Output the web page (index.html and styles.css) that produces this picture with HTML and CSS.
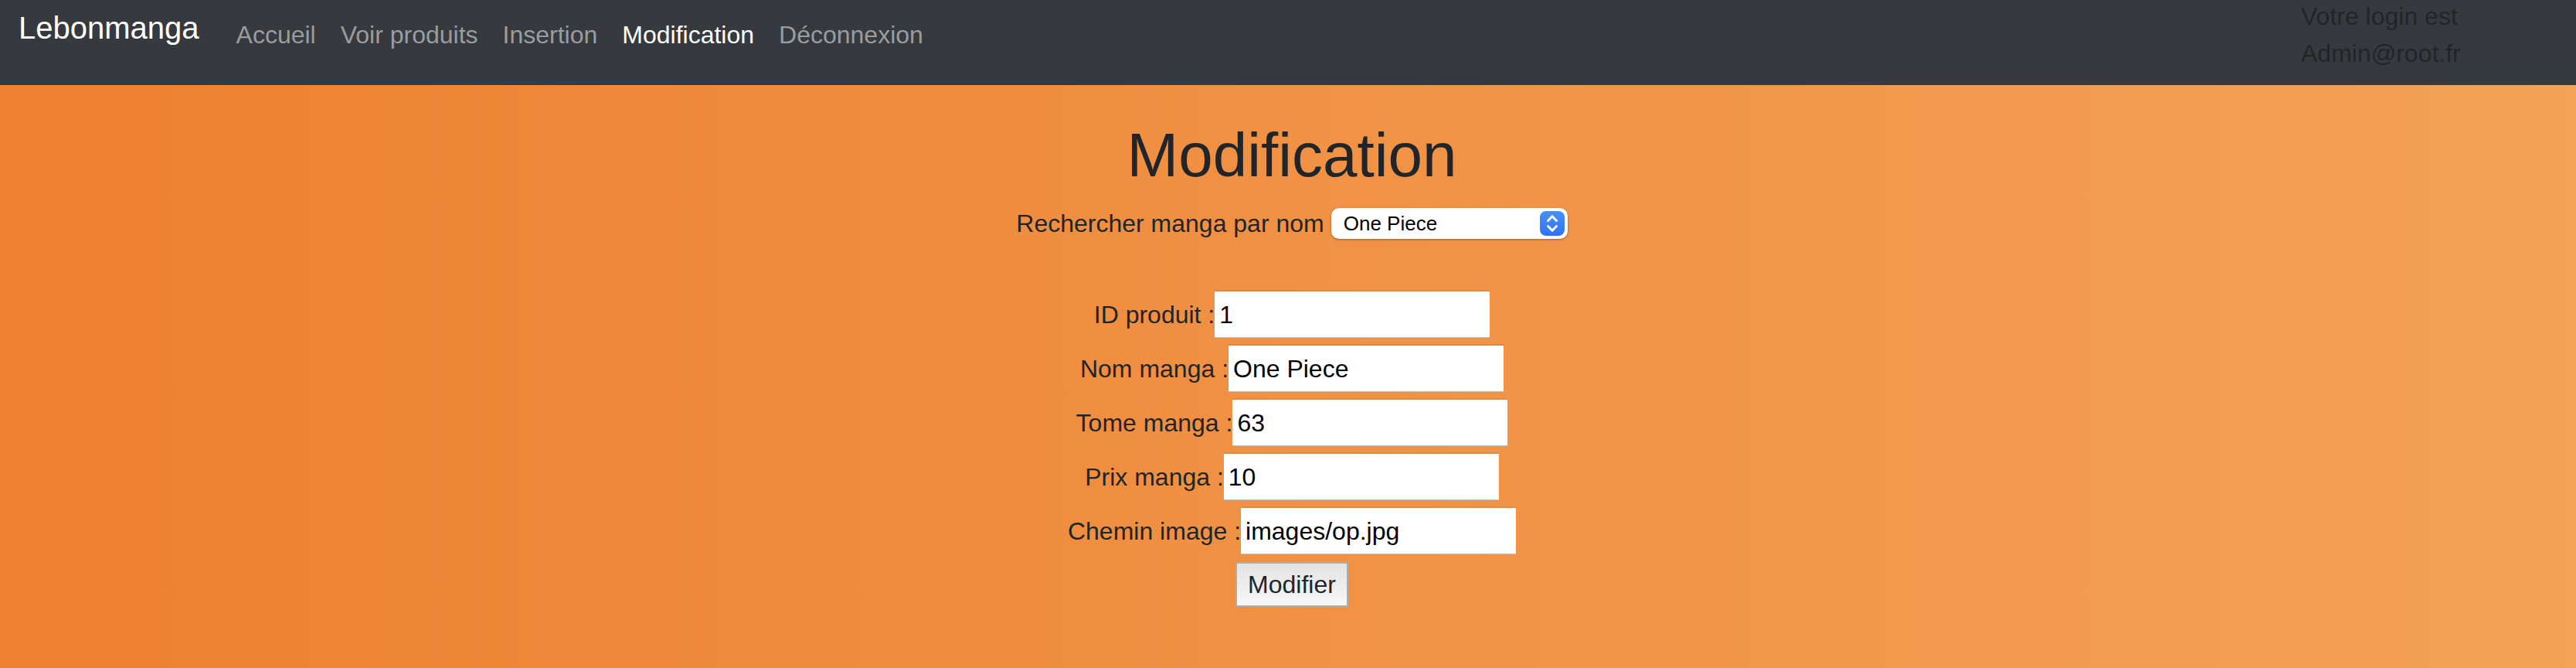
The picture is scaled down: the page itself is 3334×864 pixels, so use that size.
FILE: index.html
```html
<!DOCTYPE html>
<html lang="fr">
<head>
<meta charset="utf-8">
<title>Lebonmanga - Modification</title>
<link rel="stylesheet" href="styles.css">
</head>
<body>
<header class="navbar">
  <a class="brand" href="#">Lebonmanga</a>
  <nav class="nav">
    <a class="nav-link" href="#">Accueil</a>
    <a class="nav-link" href="#">Voir produits</a>
    <a class="nav-link" href="#">Insertion</a>
    <a class="nav-link active" href="#" aria-current="page">Modification</a>
    <a class="nav-link" href="#">Déconnexion</a>
  </nav>
  <p class="login">Votre login est<br>Admin@root.fr</p>
</header>
<main class="content">
  <h1 class="title">Modification</h1>
  <form class="search">
    <label for="manga">Rechercher manga par nom</label>
    <span class="select-wrap">
      <select id="manga" class="select"><option>One Piece</option></select>
      <svg class="select-icon" viewBox="0 0 32 32" aria-hidden="true">
        <defs><linearGradient id="blue" x1="0" y1="0" x2="0" y2="1"><stop offset="0" stop-color="#4a90f8"/><stop offset="1" stop-color="#3073f4"/></linearGradient></defs>
        <rect width="32" height="32" rx="8" fill="url(#blue)"/>
        <path d="M10.5 12.5 16 6.8l5.500 5.700M10.500 19.500l5.500 5.700 5.500-5.700" fill="none" stroke="#fff" stroke-width="3" stroke-linecap="round" stroke-linejoin="round"/>
      </svg>
    </span>
  </form>
  <form class="product">
    <div class="row"><label for="id">ID produit :</label><input class="field" id="id" type="text" value="1"></div>
    <div class="row"><label for="nom">Nom manga :</label><input class="field" id="nom" type="text" value="One Piece"></div>
    <div class="row"><label for="tome">Tome manga :</label><input class="field" id="tome" type="text" value="63"></div>
    <div class="row"><label for="prix">Prix manga :</label><input class="field" id="prix" type="text" value="10"></div>
    <div class="row"><label for="image">Chemin image :</label><input class="field" id="image" type="text" value="images/op.jpg"></div>
    <button class="submit" type="button">Modifier</button>
  </form>
</main>
</body>
</html>
```
FILE: styles.css
```css
* { box-sizing: border-box; }

body {
  margin: 0;
  min-height: 100vh;
  background: linear-gradient(to right, #ee8030, #f3a256);
  color: #212529;
  font-family: "Liberation Sans", Arial, sans-serif;
  font-size: 32px;
  line-height: 48px;
}

.navbar {
  display: flex;
  align-items: center;
  height: 110px;
  padding-left: 24px;
  background: #363a3e;
}

.brand {
  margin: 0 32px 38px 0;
  color: #fff;
  font-size: 40px;
  line-height: 60px;
  text-decoration: none;
}

.nav {
  display: flex;
  margin-bottom: 20px;
}

.nav-link {
  padding: 0 16px;
  color: #9a9c9e;
  text-decoration: none;
}

.nav-link.active { color: #fff; }

.login {
  width: 356px;
  margin: 0 0 20px auto;
}

.content {
  display: flex;
  flex-direction: column;
  align-items: center;
  padding: 43px 0 40px 10px;
}

.title {
  margin: 0 0 16px;
  font-size: 80px;
  font-weight: 400;
  line-height: 96px;
}

.search {
  display: flex;
  align-items: center;
  gap: 9px;
}

.select-wrap {
  position: relative;
  display: flex;
}

.select {
  appearance: none;
  width: 306px;
  height: 40px;
  padding: 0 44px 0 16px;
  border: 0;
  border-radius: 10px;
  background: #fff;
  box-shadow: 0 1px 3px rgba(0, 0, 0, 0.35);
  color: #000;
  font-family: inherit;
  font-size: 26px;
}

.select-icon {
  position: absolute;
  top: 4px;
  right: 4px;
  width: 32px;
  height: 32px;
  pointer-events: none;
}

.product {
  display: flex;
  flex-direction: column;
  align-items: center;
  gap: 10px;
  margin-top: 64px;
}

.row {
  display: flex;
  align-items: center;
}

.field {
  width: 356px;
  height: 60px;
  padding: 0 6px;
  border: 0;
  border-radius: 0;
  background: #fff;
  box-shadow: 0 -2px rgba(0, 0, 0, 0.06), inset 0 -1px #b9c0c4;
  color: #000;
  font: inherit;
}

.submit {
  padding: 3px 14px;
  border: 2px solid #adadad;
  border-radius: 0;
  background: linear-gradient(#e3e3e3, #f7f7f7);
  color: #212529;
  font: inherit;
}
```
